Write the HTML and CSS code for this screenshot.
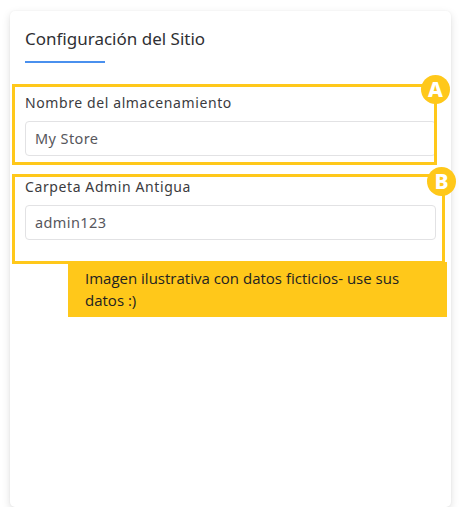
FILE: index.html
```html
<!DOCTYPE html>
<html lang="es">
<head>
<meta charset="utf-8">
<title>Configuración del Sitio</title>
<link rel="stylesheet" href="styles.css">
</head>
<body>
<div class="card">
  <div class="card-header">
    <h2 class="title">Configuración del Sitio</h2>
    <div class="title-bar"></div>
  </div>
  <div class="field field-a">
    <label class="label">Nombre del almacenamiento</label>
    <div class="input">My Store</div>
  </div>
  <div class="field field-b">
    <label class="label">Carpeta Admin Antigua</label>
    <div class="input">admin123</div>
  </div>

  <div class="mark mark-a"><span class="badge badge-a">A</span></div>
  <div class="mark mark-b"><span class="badge badge-b">B</span></div>
  <div class="note">Imagen ilustrativa con datos ficticios- use sus datos :)</div>
</div>
</body>
</html>
```
FILE: styles.css
```css
html, body {
  margin: 0;
  padding: 0;
  background: #ffffff;
}
body {
  font-family: "Noto Sans", "DejaVu Sans", sans-serif;
  padding: 11px 0 0 10px;
}
.card {
  position: relative;
  box-sizing: border-box;
  width: 441px;
  height: 496px;
  padding: 0 15px;
  background: #fff;
  border-radius: 5px;
  box-shadow: 0 3px 8px rgba(0, 0, 0, 0.13), 0 0 2px rgba(0, 0, 0, 0.05);
}
.card-header {
  padding-top: 15px;
}
.title {
  margin: 0;
  font-size: 17px;
  font-weight: 400;
  line-height: 26px;
  color: #2f2f33;
}
.title-bar {
  margin-top: 9px;
  width: 80px;
  height: 2px;
  background: #4a90ee;
}
.field {
  display: flex;
  flex-direction: column;
}
.field-a {
  margin-top: 30px;
}
.field-b {
  margin-top: 21px;
}
.label {
  font-size: 14px;
  line-height: 20px;
  letter-spacing: 0.6px;
  color: #3b3b40;
}
.input {
  box-sizing: border-box;
  margin-top: 8px;
  height: 35px;
  padding: 0 9px;
  border: 1px solid #e2e2e4;
  border-radius: 4px;
  font-size: 14.5px;
  line-height: 33px;
  letter-spacing: 0.4px;
  color: #57575c;
}
.mark {
  position: absolute;
  box-sizing: border-box;
  border: 3px solid #ffc81a;
}
.mark-a {
  left: 2px;
  top: 73px;
  width: 425px;
  height: 81px;
}
.mark-b {
  left: 2px;
  top: 163px;
  width: 433px;
  height: 90px;
}
.badge {
  position: absolute;
  width: 29px;
  height: 29px;
  border-radius: 50%;
  background: #ffc81a;
  color: #fff;
  font-family: "Noto Sans", sans-serif;
  font-weight: 800;
  font-size: 21px;
  line-height: 29px;
  text-align: center;
}
.badge-a {
  right: -16px;
  top: -12px;
}
.badge-b {
  right: -14px;
  top: -10px;
}
.note {
  position: absolute;
  box-sizing: border-box;
  left: 58px;
  top: 251px;
  width: 379px;
  height: 55px;
  padding: 5px 30px 0 17px;
  background: #ffc81a;
  font-family: "Open Sans", sans-serif;
  font-size: 15px;
  line-height: 22px;
  color: #222;
}
```
